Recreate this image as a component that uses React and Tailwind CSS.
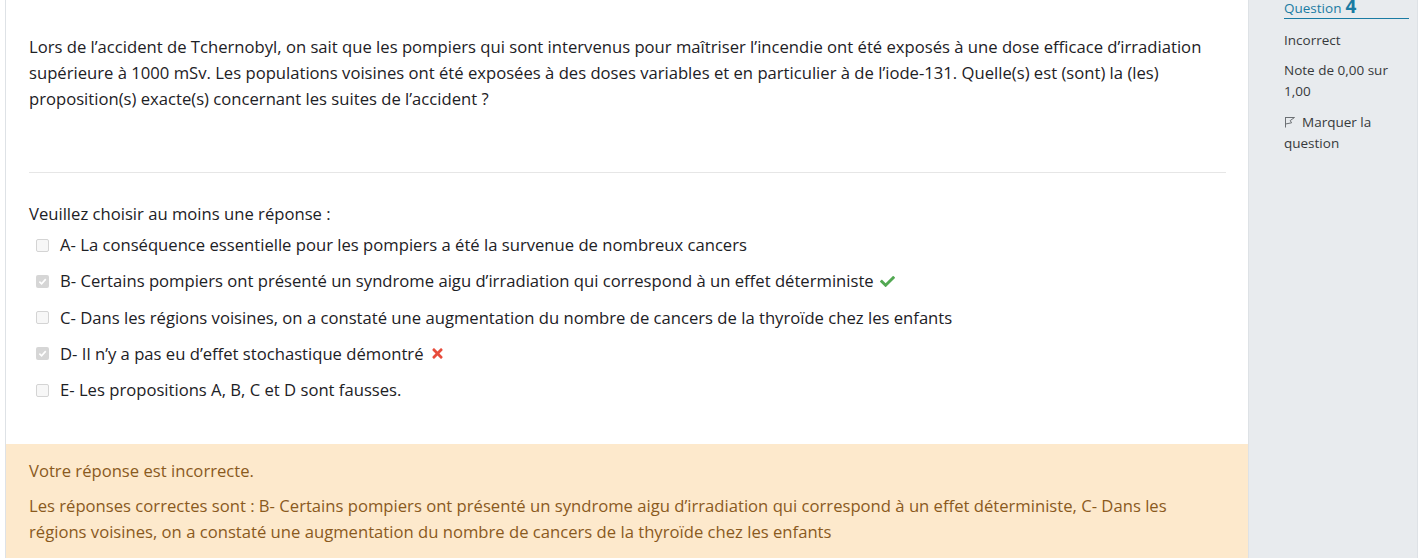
import React from 'react';
import { FaCheck, FaTimes } from 'react-icons/fa';

const options = [
  { id: 'a', label: 'A- La conséquence essentielle pour les pompiers a été la survenue de nombreux cancers', checked: false },
  { id: 'b', label: 'B- Certains pompiers ont présenté un syndrome aigu d’irradiation qui correspond à un effet déterministe', checked: true, mark: 'ok' },
  { id: 'c', label: 'C- Dans les régions voisines, on a constaté une augmentation du nombre de cancers de la thyroïde chez les enfants', checked: false },
  { id: 'd', label: 'D- Il n’y a pas eu d’effet stochastique démontré', checked: true, mark: 'ko' },
  { id: 'e', label: 'E- Les propositions A, B, C et D sont fausses.', checked: false },
];

function Checkbox({ checked }) {
  if (checked) {
    return (
      <span className="flex h-[13px] w-[13px] shrink-0 items-center justify-center rounded-[2px] bg-[#d6d6d6]">
        <svg width="9" height="9" viewBox="0 0 10 10">
          <path d="M1.5 5.2 L4 7.6 L8.6 2.4" fill="none" stroke="#fff" strokeWidth="1.8" />
        </svg>
      </span>
    );
  }
  return <span className="block h-[13px] w-[13px] shrink-0 rounded-[2px] border border-[#d4d4d4] bg-[#f7f7f7]" />;
}

function FlagIcon() {
  return (
    <svg width="12" height="12" viewBox="0 0 12 12" className="mr-[6px] inline-block align-[-1px]">
      <path d="M1.5 11.5 V1 M1.5 1.5 H10.5 L6.2 4.6 L7.6 6.8 L1.5 8" fill="none" stroke="#6b6f73" strokeWidth="1" />
    </svg>
  );
}

function Sidebar() {
  return (
    <aside className="w-[170px] shrink-0 border-x border-[#dee2e6] bg-[#e8ebee] pl-[35px] pr-[8px] text-[13.5px] leading-[21px] text-[#373a3c]">
      <h3 className="-mt-[4px] flex items-baseline gap-[4px] border-b border-[#1a7ba3] pb-0 leading-[20px] text-[#1a7ba3]">
        <span className="text-[13.5px] font-normal">Question</span>
        <span className="text-[19px] font-bold">4</span>
      </h3>
      <div className="mt-[11px]">Incorrect</div>
      <div className="mt-[9px]">Note de 0,00 sur 1,00</div>
      <div className="mt-[10px]">
        <FlagIcon />
        Marquer la question
      </div>
    </aside>
  );
}

export default function App() {
  return (
    <div
      className="flex h-[558px] w-[1418px] overflow-hidden bg-white pl-[5px] text-[#1d2125]"
      style={{ fontFamily: '"Open Sans", "Noto Sans", sans-serif' }}
    >
      <main className="flex w-[1243px] shrink-0 flex-col border-l border-[#dee2e6]">
        <section className="px-[23px] pb-[36px] pr-[22px] text-[16.65px] leading-[26px]">
          <p className="mt-[34px]">
            Lors de l’accident de Tchernobyl, on sait que les pompiers qui sont intervenus pour maîtriser l’incendie ont été exposés à une dose efficace d’irradiation supérieure à 1000 mSv. Les populations voisines ont été exposées à des doses variables et en particulier à de l’iode-131. Quelle(s) est (sont) la (les) proposition(s) exacte(s) concernant les suites de l’accident ?
          </p>
          <hr className="mt-[60px] border-t border-[#e6e6e6]" />
          <div className="mt-[28px]">Veuillez choisir au moins une réponse :</div>
          <div className="flex flex-col">
            {options.map((o) => (
              <label key={o.id} className="flex h-[36.25px] items-center pl-[7px]">
                <Checkbox checked={o.checked} />
                <span className="ml-[11px]">{o.label}</span>
                {o.mark === 'ok' && <FaCheck className="ml-[6px] text-[15px] text-[#52a852]" />}
                {o.mark === 'ko' && <FaTimes className="ml-[6px] text-[15px] text-[#e74c3c]" />}
              </label>
            ))}
          </div>
        </section>
        <section className="flex-1 bg-[#fde9cc] px-[23px] pr-[22px] pt-[14px] text-[16.65px] leading-[26px] text-[#8a5a1e]">
          <p>Votre réponse est incorrecte.</p>
          <p className="mt-[9px]">
            Les réponses correctes sont : B- Certains pompiers ont présenté un syndrome aigu d’irradiation qui correspond à un effet déterministe, C- Dans les régions voisines, on a constaté une augmentation du nombre de cancers de la thyroïde chez les enfants
          </p>
        </section>
      </main>
      <Sidebar />
    </div>
  );
}
